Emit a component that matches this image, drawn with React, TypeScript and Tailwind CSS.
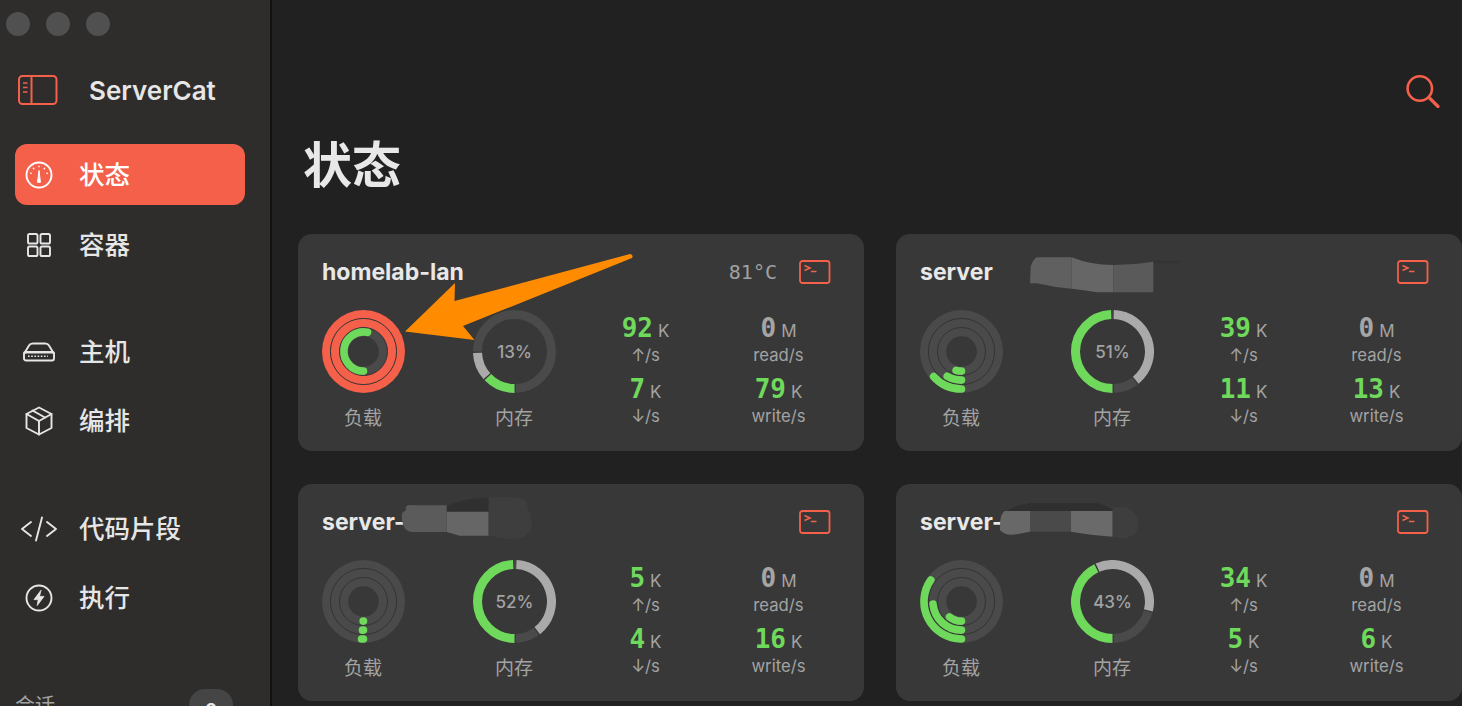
import React from "react";

const RED = "#f4604a";
const GREEN = "#6fd95c";
const CJK = "font-['Inter','Noto_Sans_CJK_SC',sans-serif]";

function pt(r: number, deg: number, c = 41.5) {
  const a = ((deg - 90) * Math.PI) / 180;
  return `${(c + r * Math.cos(a)).toFixed(3)} ${(c + r * Math.sin(a)).toFixed(3)}`;
}
function arc(r: number, from: number, to: number) {
  const large = to - from > 180 ? 1 : 0;
  return `M ${pt(r, from)} A ${r} ${r} 0 ${large} 1 ${pt(r, to)}`;
}

const RADII = [37.5, 28.6, 19.6];

function LoadRing({ sweeps, alert }: { sweeps: number[]; alert?: boolean }) {
  return (
    <svg width="83" height="83" viewBox="0 0 83 83">
      <circle cx="41.5" cy="41.5" r="41.5" fill={alert ? RED : "#4a4a4a"} />
      <circle cx="41.5" cy="41.5" r="33.1" fill="none" stroke="#333333" strokeWidth="1" />
      <circle cx="41.5" cy="41.5" r="24" fill={alert ? "#4a4a4a" : "none"} stroke="#333333" strokeWidth="1" />
      <circle cx="41.5" cy="41.5" r="15.3" fill="#383838" />
      {sweeps.map((s, i) =>
        s > 0 ? (
          <path key={i} d={arc(RADII[i], 180, 180 + s)} fill="none" stroke={GREEN} strokeWidth="7.6" strokeLinecap="round" />
        ) : null,
      )}
    </svg>
  );
}

function MemRing({ pct, green, gray }: { pct: string; green: [number, number]; gray: [number, number] }) {
  const r = 37;
  return (
    <div className="relative w-[83px] h-[83px]">
      <svg width="83" height="83" viewBox="0 0 83 83">
        <circle cx="41.5" cy="41.5" r={r} fill="none" stroke="#4a4a4a" strokeWidth="9" />
        <path d={arc(r, gray[1], gray[1] + 2)} fill="none" stroke="#383838" strokeWidth="10" />
        <path d={arc(r, 178, 180)} fill="none" stroke="#383838" strokeWidth="10" />
        <path d={arc(r, gray[0], gray[1])} fill="none" stroke="#aaaaaa" strokeWidth="9" />
        <path d={arc(r, green[1], green[1] + 2)} fill="none" stroke="#383838" strokeWidth="10" />
        <path d={arc(r, green[0], green[1])} fill="none" stroke={GREEN} strokeWidth="9" />
      </svg>
      <div className="absolute inset-0 flex items-center justify-center text-[17px] pt-[3px] font-medium text-[#a3a3a3] font-['Inter',sans-serif]">
        {pct}
      </div>
    </div>
  );
}

function Stat({ value, unit, label, muted }: { value: string; unit: string; label: string; muted?: boolean }) {
  return (
    <div className="flex flex-col items-center h-[61px]">
      <div className="flex items-baseline h-[33px]">
        <span
          className={`font-['DejaVu_Sans_Mono',monospace] font-bold text-[26px] leading-[33px] ${muted ? "text-[#a5a5a5]" : "text-[#6fd95c]"}`}
        >
          {value}
        </span>
        <span className="ml-[5px] text-[17px] text-[#a3a3a3] font-['Inter',sans-serif]">{unit}</span>
      </div>
      <div className="text-[16.7px] leading-[20px] text-[#a3a3a3] font-['Inter',sans-serif]">{label}</div>
    </div>
  );
}

function TerminalIcon() {
  return (
    <svg width="32" height="24" viewBox="0 0 32 24" fill="none" stroke={RED}>
      <rect x="1" y="1" width="29.5" height="22" rx="2.5" strokeWidth="1.8" />
      <path d="M5.5 5.5 L11 8 L5.5 10.5" strokeWidth="1.6" />
      <path d="M12 11.5 H17.5" strokeWidth="1.6" />
    </svg>
  );
}

type CardData = {
  name: string;
  temp?: string;
  alert?: boolean;
  sweeps: number[];
  pct: string;
  green: [number, number];
  gray: [number, number];
  stats: [string, string, string, boolean?][];
  blob?: React.ReactNode;
};

function Card({ d }: { d: CardData }) {
  return (
    <div className="relative h-[217px] rounded-[14px] bg-[#383838] pl-6 pr-[33px] overflow-hidden">
      <div className="flex items-center h-[76px]">
        <div className="text-[23px] font-bold text-[#e8e8e8] font-['Inter',sans-serif]">{d.name}</div>
        <div className="ml-auto flex items-center">
          {d.temp && (
            <span className="mr-[22px] text-[20px] text-[#a0a0a0] font-['DejaVu_Sans_Mono',monospace]">{d.temp}</span>
          )}
          <TerminalIcon />
        </div>
      </div>
      <div className="flex">
        <div className="flex flex-col items-center w-[83px]">
          <LoadRing sweeps={d.sweeps} alert={d.alert} />
          <div className={`mt-[14px] -ml-[1px] text-[19px] leading-[24px] text-[#a3a3a3] ${CJK}`}>负载</div>
        </div>
        <div className="flex flex-col items-center w-[83px] ml-[68px]">
          <MemRing pct={d.pct} green={d.green} gray={d.gray} />
          <div className={`mt-[14px] -ml-[1px] text-[19px] leading-[24px] text-[#a3a3a3] ${CJK}`}>内存</div>
        </div>
        <div className="grid grid-cols-[133px_133px] ml-[23px] mt-[2px] content-start">
          {d.stats.map((s, i) => (
            <Stat key={i} value={s[0]} unit={s[1]} label={s[2]} muted={s[3]} />
          ))}
        </div>
      </div>
      {d.blob}
    </div>
  );
}

function Blob({ dx, children }: { dx: number; children: React.ReactNode }) {
  return (
    <svg className="absolute left-0 top-0 pointer-events-none" width="566" height="80" viewBox="0 0 566 80">
      <g transform={`translate(${dx} -4) scale(${1 / 3})`}>{children}</g>
    </svg>
  );
}

const cards: CardData[] = [
  {
    name: "homelab-lan",
    temp: "81°C",
    alert: true,
    sweeps: [0, 0, 192],
    pct: "13%",
    green: [180, 226],
    gray: [228, 268],
    stats: [
      ["92", "K", "↑/s"],
      ["0", "M", "read/s", true],
      ["7", "K", "↓/s"],
      ["79", "K", "write/s"],
    ],
  },
  {
    name: "server",
    sweeps: [48, 30, 16],
    pct: "51%",
    green: [180, 358],
    gray: [2, 141],
    stats: [
      ["39", "K", "↑/s"],
      ["0", "M", "read/s", true],
      ["11", "K", "↓/s"],
      ["13", "K", "write/s"],
    ],
    blob: (
      <Blob dx={-6}>
        <path d="M790 92 H870 V100 H790 Z" fill="#333333" />
        <path d="M545 82 H440 Q428 90 422 110 L420 160 L440 160 Q490 172 545 176 Z" fill="#606060" />
        <path d="M545 82 Q600 105 670 105 V187 H620 Q580 180 545 176 Z" fill="#666666" />
        <path d="M670 105 Q730 105 790 95 V187 H670 Z" fill="#5a5a5a" />
      </Blob>
    ),
  },
  {
    name: "server-",
    sweeps: [3, 2, 1],
    pct: "52%",
    green: [180, 358],
    gray: [3, 142],
    stats: [
      ["5", "K", "↑/s"],
      ["0", "M", "read/s", true],
      ["4", "K", "↓/s"],
      ["16", "K", "write/s"],
    ],
    blob: (
      <Blob dx={-2}>
        <path d="M452 78 Q510 52 578 54 V100 H452 Z" fill="#303030" />
        <path d="M452 76 H350 Q325 72 330 90 L318 100 Q315 150 345 156 H452 Z" fill="#5b5b5b" />
        <path d="M452 95 H578 V167 H490 Q465 160 452 156 Z" fill="#666666" />
        <path d="M578 52 H660 Q695 55 695 85 Q710 110 705 150 Q690 178 640 178 L578 167 Z" fill="#3e3e3e" />
      </Blob>
    ),
  },
  {
    name: "server-",
    sweeps: [125, 85, 38],
    pct: "43%",
    green: [180, 334],
    gray: [336, 464],
    stats: [
      ["34", "K", "↑/s"],
      ["0", "M", "read/s", true],
      ["5", "K", "↓/s"],
      ["6", "K", "write/s"],
    ],
    blob: (
      <Blob dx={-6}>
        <path d="M350 93 Q385 72 420 70 H620 Q650 75 670 93 Z" fill="#2f2f2f" />
        <path d="M420 93 H345 Q328 100 330 150 Q345 170 385 162 L420 155 Z" fill="#686868" />
        <path d="M420 93 H543 V155 H420 Z" fill="#4a4a4a" />
        <path d="M543 93 H668 V170 Q600 165 543 155 Z" fill="#6a6a6a" />
        <path d="M668 82 H710 Q745 100 745 130 Q745 170 700 176 L668 170 Z" fill="#3e3e3e" />
      </Blob>
    ),
  },
];

function Nav({ label, icon, active, mt }: { label: string; icon: React.ReactNode; active?: boolean; mt: string }) {
  return (
    <div className={`${mt} flex items-center h-[61px] ml-[15px] mr-[25px] rounded-[12px] ${active ? "bg-[#f4604a] text-white" : "text-[#e6e6e6]"}`}>
      <div className="w-12 flex justify-center">{icon}</div>
      <div className={`ml-[16px] text-[25.5px] leading-none font-medium ${CJK}`}>{label}</div>
    </div>
  );
}

const stroke = { fill: "none", stroke: "currentColor", strokeWidth: 1.9, strokeLinecap: "round", strokeLinejoin: "round" } as const;

const icons = {
  gauge: (
    <svg width="28" height="28" viewBox="0 0 28 28" {...stroke}>
      <circle cx="14" cy="14" r="12.5" />
      <path d="M12.6 21 L14 9.5 L15.4 21 Z" fill="currentColor" strokeWidth="1" />
      <path d="M14 5.2v.6M8.4 7.2l.4.5M19.6 7.2l-.4.5M5.6 12.2l.6.2M22.4 12.2l-.6.2" strokeWidth="1.4" />
    </svg>
  ),
  grid: (
    <svg width="26" height="26" viewBox="0 0 26 26" {...stroke}>
      <rect x="2" y="2" width="9.5" height="9.5" rx="1.6" />
      <rect x="14.5" y="2" width="9.5" height="9.5" rx="1.6" />
      <rect x="2" y="14.5" width="9.5" height="9.5" rx="1.6" />
      <rect x="14.5" y="14.5" width="9.5" height="9.5" rx="1.6" />
    </svg>
  ),
  host: (
    <svg width="32" height="20" viewBox="0 0 32 20" {...stroke}>
      <path d="M1.5 11 L6 3.5 Q7 1.5 10 1.5 H22 Q25 1.5 26 3.5 L30.5 11" />
      <rect x="1" y="10" width="30" height="8.5" rx="2" />
      <path d="M1.5 10.5 H30.5" />
      <path d="M5 14.3 H25" strokeWidth="1.6" strokeDasharray="1.6 1.6" strokeLinecap="butt" />
    </svg>
  ),
  cube: (
    <svg width="28" height="30" viewBox="0 0 28 30" {...stroke}>
      <path d="M14 1.5 L26.5 8 V22 L14 28.5 L1.5 22 V8 Z" />
      <path d="M1.5 8 L14 15 L26.5 8 M14 15 V28.5" />
      <path d="M7.5 4.5 L20 11.5" />
    </svg>
  ),
  code: (
    <svg width="38" height="26" viewBox="0 0 38 26" {...stroke}>
      <path d="M11 6 L2 13 L11 20" />
      <path d="M27 6 L36 13 L27 20" />
      <path d="M22 1.5 L16 24.5" />
    </svg>
  ),
  bolt: (
    <svg width="28" height="28" viewBox="0 0 28 28" {...stroke}>
      <circle cx="14" cy="14" r="12.5" />
      <path d="M15.8 6.5 L9 15.6 H13.2 L12.2 21.5 L19 12.4 H14.8 Z" fill="currentColor" strokeWidth="0.8" />
    </svg>
  ),
};

export default function App() {
  return (
    <div className="relative flex w-[1462px] h-[706px] overflow-hidden bg-[#212121] font-['Inter',sans-serif]">
      <aside className="w-[272px] shrink-0 h-full bg-[#2e2d2c] border-r-2 border-[#111111] overflow-hidden">
        <div className="flex items-center gap-[16px] h-[48px] pl-[6px]">
          <div className="w-6 h-6 rounded-full bg-[#505050]" />
          <div className="w-6 h-6 rounded-full bg-[#505050]" />
          <div className="w-6 h-6 rounded-full bg-[#505050]" />
        </div>
        <div className="flex items-center h-[48px] mt-[18px] pl-[18px]">
          <svg width="40" height="30" viewBox="0 0 40 30" fill="none" stroke={RED}>
            <rect x="1" y="1" width="37.5" height="28" rx="3.5" strokeWidth="2" />
            <path d="M13.5 1 V29" strokeWidth="2" />
            <path d="M5 8h4.5M5 12.5h4.5M5 17h4.5" strokeWidth="1.6" />
          </svg>
          <div className="ml-[31px] text-[26px] font-semibold text-[#e6e6e6]">ServerCat</div>
        </div>
        <Nav mt="mt-[30px]" active label="状态" icon={icons.gauge} />
        <Nav mt="mt-[9px]" label="容器" icon={icons.grid} />
        <Nav mt="mt-[46px]" label="主机" icon={icons.host} />
        <Nav mt="mt-[8px]" label="编排" icon={icons.cube} />
        <Nav mt="mt-[47px]" label="代码片段" icon={icons.code} />
        <Nav mt="mt-[8px]" label="执行" icon={icons.bolt} />
        <div className="flex items-start justify-between mt-[61px] pl-[15px] pr-[37px]">
          <div className={`mt-[5px] text-[20px] leading-[24px] text-[#a3a3a3] ${CJK}`}>会话</div>
          <div className="w-[44px] h-[36px] rounded-[16px] bg-[#454545] text-center text-[18px] leading-[32px] font-bold pt-[5px] text-[#e6e6e6]">
            0
          </div>
        </div>
      </aside>
      <main className="flex-1 pl-[26px]">
        <div className="flex justify-end pt-[75px] pr-[22px]">
          <svg width="34" height="33" viewBox="0 0 34 33" fill="none" stroke={RED} strokeWidth="2.6" strokeLinecap="round">
            <circle cx="13.8" cy="13.5" r="12.2" />
            <path d="M23 22.5 L32 31.5" strokeWidth="3.2" />
          </svg>
        </div>
        <div className={`mt-[28px] pl-[5px] h-[60px] text-[49px] leading-[60px] font-bold text-[#e8e8e8] ${CJK}`}>状态</div>
        <div className="grid grid-cols-[566px_566px] gap-x-[32px] gap-y-[33px] mt-[38px]">
          {cards.map((c, i) => (
            <Card key={i} d={c} />
          ))}
        </div>
      </main>
      <svg className="absolute left-0 top-0 pointer-events-none" width="1462" height="706" viewBox="0 0 1462 706">
        <path d="M405 331.5 L455 283 L454.5 301 L630 254 Q634 255 632 258 L463 326 L474.5 340 Z" fill="#ff8c00" />
      </svg>
    </div>
  );
}
